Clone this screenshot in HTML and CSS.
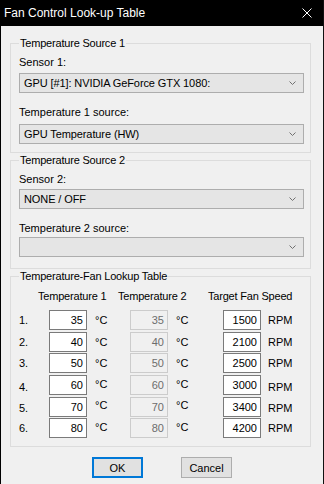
FILE: index.html
```html
<!DOCTYPE html>
<html lang="en">
<head>
    <meta charset="UTF-8">
    <title>Fan Control Look-up Table</title>
    <link rel="stylesheet" href="styles.css">
</head>
<body>

<div class="window">
    <!-- Title bar -->
    <div class="titlebar">
        <span class="title">Fan Control Look-up Table</span>
        <svg class="close" width="10" height="10" viewBox="0 0 10 10">
            <path d="M0.5 0.5 L9.5 9.5 M9.5 0.5 L0.5 9.5" stroke="#fff" stroke-width="1" fill="none"/>
        </svg>
    </div>

    <div class="dialog">
        <!-- Source 1 -->
        <fieldset class="group group-src1">
            <legend>Temperature Source 1</legend>
            <div class="field-label">Sensor 1:</div>
            <div class="combo">
                <span>GPU [#1]: NVIDIA GeForce GTX 1080:</span>
                <svg class="chevron" width="7" height="4" viewBox="0 0 7 4"><path d="M0.5 0.5 L3.5 3.5 L6.5 0.5" stroke="#707070" fill="none"/></svg>
            </div>
            <div class="field-label second">Temperature 1 source:</div>
            <div class="combo">
                <span>GPU Temperature (HW)</span>
                <svg class="chevron" width="7" height="4" viewBox="0 0 7 4"><path d="M0.5 0.5 L3.5 3.5 L6.5 0.5" stroke="#707070" fill="none"/></svg>
            </div>
        </fieldset>

        <!-- Source 2 -->
        <fieldset class="group group-src2">
            <legend>Temperature Source 2</legend>
            <div class="field-label">Sensor 2:</div>
            <div class="combo">
                <span>NONE / OFF</span>
                <svg class="chevron" width="7" height="4" viewBox="0 0 7 4"><path d="M0.5 0.5 L3.5 3.5 L6.5 0.5" stroke="#707070" fill="none"/></svg>
            </div>
            <div class="field-label second">Temperature 2 source:</div>
            <div class="combo">
                <span></span>
                <svg class="chevron" width="7" height="4" viewBox="0 0 7 4"><path d="M0.5 0.5 L3.5 3.5 L6.5 0.5" stroke="#707070" fill="none"/></svg>
            </div>
        </fieldset>

        <!-- Lookup table -->
        <fieldset class="group table-group">
            <legend>Temperature-Fan Lookup Table</legend>
            <div class="table-head">
                <span class="head-t1">Temperature 1</span>
                <span class="head-t2">Temperature 2</span>
                <span class="head-fan">Target Fan Speed</span>
            </div>
            <div class="lookup">
                <span class="num">1.</span><div class="box">35</div><span class="unit">°C</span><div class="box disabled">35</div><span class="unit">°C</span><div class="box">1500</div><span class="unit rpm">RPM</span>
                <span class="num">2.</span><div class="box">40</div><span class="unit">°C</span><div class="box disabled">40</div><span class="unit">°C</span><div class="box">2100</div><span class="unit rpm">RPM</span>
                <span class="num">3.</span><div class="box">50</div><span class="unit">°C</span><div class="box disabled">50</div><span class="unit">°C</span><div class="box">2500</div><span class="unit rpm">RPM</span>
                <span class="num low">4.</span><div class="box">60</div><span class="unit high">°C</span><div class="box disabled">60</div><span class="unit high">°C</span><div class="box">3000</div><span class="unit rpm low">RPM</span>
                <span class="num low">5.</span><div class="box">70</div><span class="unit high">°C</span><div class="box disabled">70</div><span class="unit high">°C</span><div class="box">3400</div><span class="unit rpm low">RPM</span>
                <span class="num">6.</span><div class="box">80</div><span class="unit high">°C</span><div class="box disabled">80</div><span class="unit high">°C</span><div class="box">4200</div><span class="unit rpm">RPM</span>
            </div>
        </fieldset>

        <div class="buttons">
            <button class="btn btn-default">OK</button>
            <button class="btn">Cancel</button>
        </div>
    </div>
</div>

</body>
</html>
```

FILE: styles.css
```css
/* Page */
body {
    margin: 0;
    padding: 0;
    background: #f0f0f0;
    font-family: 'Liberation Sans', Arial, sans-serif;
    font-size: 11px;
    color: #000;
}

/* Window frame */
.window {
    width: 324px;
    height: 484px;
    box-sizing: border-box;
    border-left: 1px solid #000;
    border-right: 1px solid #111;
    background: #f0f0f0;
    overflow: hidden;
}

/* Title bar */
.titlebar {
    height: 26px;
    background: #000;
    color: #fff;
    display: flex;
    align-items: center;
    justify-content: space-between;
    padding: 0 11px 0 3px;
}

.title {
    font-size: 12px;
}

/* Dialog body */
.dialog {
    padding: 11px 0 0 9px;
}

/* Group boxes */
.group {
    width: 301px;
    box-sizing: border-box;
    min-width: 0;
    margin: 0;
    padding: 0 6px 8px 8px;
    border: 1px solid #dcdcdc;
    display: flex;
    flex-direction: column;
}

.group legend {
    padding: 0 1px;
    line-height: 12px;
    letter-spacing: -0.2px;
}

.field-label {
    line-height: 14px;
}

.combo {
    height: 20px;
    box-sizing: border-box;
    border: 1px solid #adadad;
    background: #e5e5e5;
    display: flex;
    align-items: center;
    justify-content: space-between;
    padding: 0 7px 0 4px;
    letter-spacing: -0.1px;
}

/* Source 1 spacing */
.group-src1 .field-label {
    margin: 6px 0 4px;
}

.group-src1 .field-label.second {
    margin: 12px 0 5px;
}

/* Source 2 spacing */
.group-src2 {
    margin-top: 1px;
    padding-bottom: 11px;
}

.group-src2 .field-label {
    margin: 6px 0 3px;
}

.group-src2 .field-label.second {
    margin: 12px 0 2px;
}

/* Lookup table */
.table-group {
    margin-top: 1px;
    padding-bottom: 8px;
}

.table-head {
    display: flex;
    line-height: 14px;
    margin-top: 7px;
    padding-left: 19px;
    letter-spacing: -0.2px;
}

.head-t1 {
    width: 80px;
}

.head-t2 {
    width: 90px;
}

.lookup {
    display: grid;
    grid-template-columns: 30px 38px 43px 38px 55px 38px auto;
    grid-auto-rows: 20px;
    row-gap: 1.7px;
    margin-top: 7px;
    align-items: center;
}

.box {
    height: 20px;
    box-sizing: border-box;
    border: 1px solid #7a7a7a;
    background: #fff;
    text-align: right;
    padding-right: 3px;
    line-height: 18px;
}

.box.disabled {
    border-color: #cccccc;
    background: #f0f0f0;
    color: #6d6d6d;
}

.unit {
    padding-left: 8px;
}

.unit.rpm {
    padding-left: 7px;
}

.low {
    padding-top: 3px;
}

.high {
    padding-bottom: 3px;
}

/* Buttons */
.buttons {
    display: flex;
    justify-content: center;
    gap: 38px;
    margin-top: 10px;
    padding-right: 9px;
}

.btn {
    width: 51px;
    height: 21px;
    box-sizing: border-box;
    border: 1px solid #adadad;
    background: #e1e1e1;
    font-family: 'Liberation Sans', Arial, sans-serif;
    font-size: 11px;
    padding: 0;
    color: #000;
}

.btn-default {
    border: 2px solid #0078d7;
}
```
